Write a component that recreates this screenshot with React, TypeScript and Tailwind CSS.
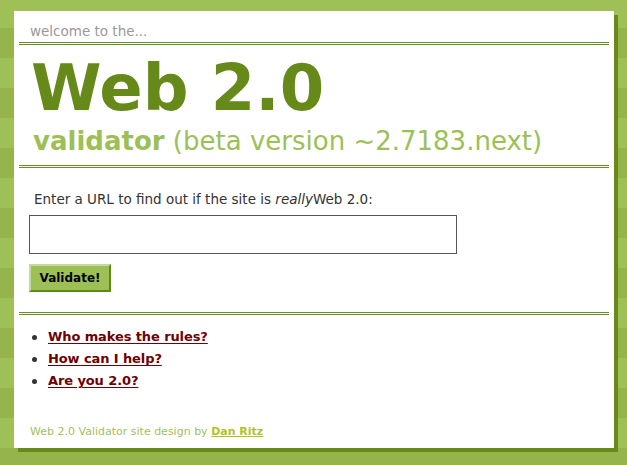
import React from "react";

const font = { fontFamily: '"DejaVu Sans", Verdana, sans-serif' };

export default function App() {
  return (
    <div
      className="min-h-screen w-full pt-[11px] pl-[14px] bg-[repeating-linear-gradient(to_bottom,#9fc057_0px,#9fc057_28px,#95b54c_28px,#95b54c_58px,#9fc057_58px,#9fc057_60px)]"
      style={font}
    >
      <div className="w-[600px] h-[437px] bg-white shadow-[4px_4px_0_0_#678a18] px-[5px] flex flex-col">
        {/* welcome */}
        <div className="border-b-[3px] border-double border-[#6b8e23] pt-[12px] pb-[3px] pl-[11px]">
          <div className="text-[13.5px] leading-[16px] text-[#999999]">welcome to the...</div>
        </div>

        {/* title */}
        <div className="border-b-[3px] border-double border-[#6b8e23] pt-[11px] pb-[11px]">
          <h1 className="pl-[12px] text-[64px] leading-none font-bold text-[#668a19]">Web 2.0</h1>
          <div className="pl-[14px] mt-[8px] text-[26px] leading-none text-[#9dbf58]">
            <span className="font-bold">validator</span> (beta version ~2.7183.next)
          </div>
        </div>

        {/* form */}
        <div className="border-b-[3px] border-double border-[#6b8e23] pt-[23px] pb-[20px] pl-[10px]">
          <div className="pl-[5px] text-[13.5px] leading-[16px] text-[#333333]">
            Enter a URL to find out if the site is <i>really</i>Web 2.0:
          </div>
          <input
            type="text"
            className="mt-[8px] block w-[428px] h-[39px] border border-[#555555] bg-white outline-none"
          />
          <button
            className="mt-[10px] block w-[82px] h-[28px] bg-[#9cc055] border-2 border-t-[#c3da9c] border-l-[#c3da9c] border-b-[#5e8a14] border-r-[#5e8a14] text-[12px] font-bold text-black leading-none"
            style={font}
          >
            Validate!
          </button>
        </div>

        {/* links */}
        <ul className="pt-[11px] pl-[13px]">
          {["Who makes the rules?", "How can I help?", "Are you 2.0?"].map((t) => (
            <li key={t} className="flex items-center h-[22px]">
              <span className="w-[5px] h-[5px] rounded-full bg-[#333333] mr-[11px]" />
              <a href="#" className="text-[13px] tracking-[-0.1px] font-bold text-[#700000] underline underline-offset-[2px]">
                {t}
              </a>
            </li>
          ))}
        </ul>

        <div className="mt-auto pb-[9px] pl-[11px] text-[11px] leading-[14px] text-[#a2bf5c]">
          Web 2.0 Validator site design by{" "}
          <a href="#" className="font-bold text-[#b1c21e] underline">
            Dan Ritz
          </a>
        </div>
      </div>
    </div>
  );
}
